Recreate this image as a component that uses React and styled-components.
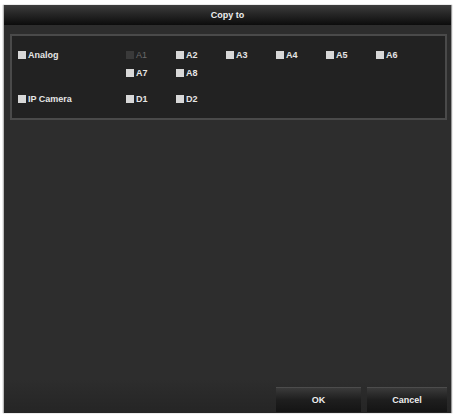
import React from "react"
import styled, { createGlobalStyle, css } from "styled-components"

const GlobalStyle = createGlobalStyle`
  html, body {
    margin: 0;
    background: #fff;
    font-family: "Liberation Sans", Arial, sans-serif;
  }
`

const Page = styled.div`
  width: 456px;
  height: 415px;
  padding: 5px 4px 2px 3px;
  box-sizing: border-box;
`

const Dialog = styled.div`
  height: 100%;
  display: flex;
  flex-direction: column;
  background: #2d2d2d;
  border-left: 1px solid #bbb;
  border-right: 1px solid #999;
  box-shadow: 0 0 1px #888;
`

const TitleBar = styled.div`
  height: 20px;
  flex: none;
  display: flex;
  align-items: center;
  justify-content: center;
  background: linear-gradient(#3c3c3c, #262626 45%, #0c0c0c);
  color: #eee;
  font-size: 9px;
  font-weight: bold;
`

const Body = styled.div`
  flex: 1;
  padding: 9px 4px 0 6px;
`

const GroupBox = styled.div`
  border: 2px solid #4a4a4a;
  background: #222;
  padding: 14px 0 6px 6px;
  display: grid;
  grid-template-columns: 108px repeat(6, 50px);
`

const Cell = styled.label`
  height: ${p => (p.tall ? 26 : 18)}px;
  display: flex;
  align-items: flex-start;
  gap: 2px;
  color: #e6e6e6;
  font-size: 9px;
  font-weight: bold;
  line-height: 10px;
  grid-column: ${p => p.col || "auto"};
  ${p => p.disabled && css`
    color: #6a6a6a;
    font-weight: normal;
  `}
`

const Box = styled.span`
  width: 8px;
  height: 8px;
  margin-top: 1px;
  flex: none;
  background: #d8d8d8;
  ${p => p.disabled && css`
    background: #3a3a3a;
  `}
`

const Footer = styled.div`
  height: 32px;
  flex: none;
  display: flex;
  justify-content: flex-end;
  align-items: flex-end;
  gap: 6px;
  padding: 0 4px 1px 0;
  background: linear-gradient(#2d2d2d, #252525);
`

const Button = styled.div`
  width: ${p => p.w}px;
  height: 24px;
  display: flex;
  align-items: center;
  justify-content: center;
  color: #eee;
  font-size: 9px;
  font-weight: bold;
  background: linear-gradient(#3a3a3a, #1e1e1e 50%, #141414);
  border-top: 1px solid #4c4c4c;
`

const Check = ({ label, disabled, col, tall }) => (
  <Cell disabled={disabled} col={col} tall={tall}>
    <Box disabled={disabled} />
    {label}
  </Cell>
)

const analog = ["A1", "A2", "A3", "A4", "A5", "A6"]

export default function App() {
  return (
    <Page>
      <GlobalStyle />
      <Dialog>
        <TitleBar>Copy to</TitleBar>
        <Body>
          <GroupBox>
            <Check label="Analog" />
            {analog.map(a => (
              <Check key={a} label={a} disabled={a === "A1"} />
            ))}
            <Check label="A7" col={2} tall />
            <Check label="A8" tall />
            <Check label="IP Camera" col={1} />
            <Check label="D1" />
            <Check label="D2" />
          </GroupBox>
        </Body>
        <Footer>
          <Button w={85}>OK</Button>
          <Button w={80}>Cancel</Button>
        </Footer>
      </Dialog>
    </Page>
  )
}
